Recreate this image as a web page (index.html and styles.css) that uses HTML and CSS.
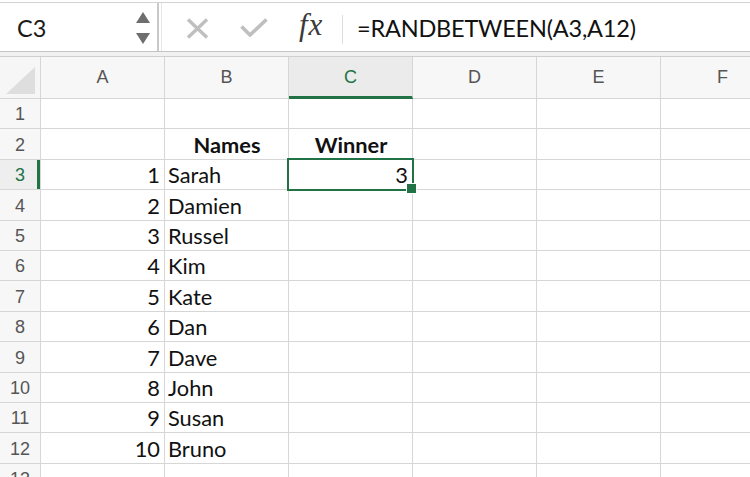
FILE: index.html
```html
<!DOCTYPE html>
<html>
<head>
<meta charset="utf-8">
<link rel="stylesheet" href="styles.css">
</head>
<body>
<div class="app">
  <div class="fbar">
    <div class="namebox">
      <span class="ref">C3</span>
      <div class="spin">
        <svg width="14" height="11" viewBox="0 0 14 11"><polygon points="7,0 14,11 0,11" fill="#6e6e6e"/></svg>
        <svg width="14" height="11" viewBox="0 0 14 11"><polygon points="0,0 14,0 7,11" fill="#6e6e6e"/></svg>
      </div>
    </div>
    <div class="fsep"></div>
    <div class="tools">
      <svg class="ico-x" width="23" height="21" viewBox="0 0 23 21"><path d="M2 1.5 L21 19.5 M21 1.5 L2 19.5" stroke="#bfbfbf" stroke-width="3.4" fill="none"/></svg>
      <svg class="ico-ok" width="28" height="19" viewBox="0 0 28 19"><path d="M1.5 8.5 L10 17 L26.5 1.5" stroke="#bfbfbf" stroke-width="3.6" fill="none"/></svg>
      <span class="fx">fx</span>
    </div>
    <div class="vsep"></div>
    <div class="formula">=RANDBETWEEN(A3,A12)</div>
  </div>
  <div class="gap"></div>
  <div class="sheet">
    <div class="corner"><svg width="30" height="28" viewBox="0 0 30 28"><polygon points="29,0 29,27 0,27" fill="#dedede"/></svg></div>
    <div class="ch">A</div>
    <div class="ch">B</div>
    <div class="ch sel">C</div>
    <div class="ch">D</div>
    <div class="ch">E</div>
    <div class="ch">F</div>

    <div class="rh">1</div><div class="c"></div><div class="c"></div><div class="c"></div><div class="c"></div><div class="c"></div><div class="c"></div>
    <div class="rh">2</div><div class="c"></div><div class="c b ctr">Names</div><div class="c b ctr">Winner</div><div class="c"></div><div class="c"></div><div class="c"></div>
    <div class="rh sel">3</div><div class="c num">1</div><div class="c">Sarah</div><div class="c num active">3</div><div class="c"></div><div class="c"></div><div class="c"></div>
    <div class="rh">4</div><div class="c num">2</div><div class="c">Damien</div><div class="c"></div><div class="c"></div><div class="c"></div><div class="c"></div>
    <div class="rh">5</div><div class="c num">3</div><div class="c">Russel</div><div class="c"></div><div class="c"></div><div class="c"></div><div class="c"></div>
    <div class="rh">6</div><div class="c num">4</div><div class="c">Kim</div><div class="c"></div><div class="c"></div><div class="c"></div><div class="c"></div>
    <div class="rh">7</div><div class="c num">5</div><div class="c">Kate</div><div class="c"></div><div class="c"></div><div class="c"></div><div class="c"></div>
    <div class="rh">8</div><div class="c num">6</div><div class="c">Dan</div><div class="c"></div><div class="c"></div><div class="c"></div><div class="c"></div>
    <div class="rh">9</div><div class="c num">7</div><div class="c">Dave</div><div class="c"></div><div class="c"></div><div class="c"></div><div class="c"></div>
    <div class="rh">10</div><div class="c num">8</div><div class="c">John</div><div class="c"></div><div class="c"></div><div class="c"></div><div class="c"></div>
    <div class="rh">11</div><div class="c num">9</div><div class="c">Susan</div><div class="c"></div><div class="c"></div><div class="c"></div><div class="c"></div>
    <div class="rh">12</div><div class="c num">10</div><div class="c">Bruno</div><div class="c"></div><div class="c"></div><div class="c"></div><div class="c"></div>
    <div class="rh">13</div><div class="c"></div><div class="c"></div><div class="c"></div><div class="c"></div><div class="c"></div><div class="c"></div>
  </div>
</div>
</body>
</html>
```
FILE: styles.css
```css
html, body {
  margin: 0;
  padding: 0;
  background: #fff;
}
.app {
  width: 750px;
  height: 477px;
  overflow: hidden;
  font-family: Lato, "Open Sans", sans-serif;
}
.fbar {
  display: flex;
  align-items: stretch;
  height: 48px;
  margin-top: 2px;
  border-top: 1px solid #d3d3d3;
  border-bottom: 1px solid #c4c4c4;
  background: #fff;
}
.namebox {
  width: 157px;
  display: flex;
  align-items: center;
  justify-content: space-between;
  padding: 0 7px 0 17px;
  box-sizing: border-box;
}
.ref {
  font-size: 23.5px;
  color: #1a1a1a;
  padding-top: 2px;
}
.spin {
  display: flex;
  flex-direction: column;
  gap: 10px;
  padding-top: 1px;
}
.fsep {
  width: 2px;
  border-left: 2px solid #c9c9c9;
  border-right: 1px solid #e6e6e6;
}
.tools {
  display: flex;
  align-items: center;
  padding-left: 24px;
  width: 180px;
  box-sizing: border-box;
}
.ico-x { margin-top: 2px; }
.ico-ok { margin-left: 31px; margin-top: 1px; }
.fx {
  margin-left: 31px;
  font-family: "Liberation Serif", "DejaVu Serif", serif;
  font-style: italic;
  font-size: 31px;
  color: #3a3a3a;
  letter-spacing: 1px;
  padding-bottom: 4px;
}
.vsep {
  width: 1px;
  background: #dcdcdc;
  margin: 12px 0 7px 0;
}
.formula {
  display: flex;
  align-items: center;
  padding-left: 14px;
  padding-top: 2px;
  font-size: 23.5px;
  color: #111;
  letter-spacing: -0.2px;
}
.gap {
  height: 4px;
  background: #f1f1f1;
  border-bottom: 1px solid #cfcfcf;
}
.sheet {
  display: grid;
  grid-template-columns: 41px repeat(6, 124px);
  grid-template-rows: 42px repeat(13, 30.4px);
}
.sheet > div {
  box-sizing: border-box;
  border-right: 1px solid #d6d6d6;
  border-bottom: 1px solid #d6d6d6;
}
.corner {
  background: #f6f6f6;
  display: flex;
  align-items: flex-end;
  justify-content: flex-end;
  padding: 0 4px 3px 0;
}
.ch {
  background: #f7f7f7;
  display: flex;
  align-items: flex-end;
  justify-content: center;
  padding-bottom: 10px;
  font-family: "Liberation Sans", Arial, sans-serif;
  font-size: 18px;
  color: #555;
}
.ch.sel {
  background: #ebebeb;
  color: #217346;
  border-bottom: 3px solid #217346;
  padding-bottom: 8px;
}
.rh {
  background: #f7f7f7;
  display: flex;
  align-items: flex-end;
  justify-content: center;
  padding-bottom: 3px;
  font-family: "Liberation Sans", Arial, sans-serif;
  font-size: 18px;
  color: #555;
}
.rh.sel {
  color: #217346;
  background: #eeeeee;
  box-shadow: inset -3px 0 0 #217346;
}
.c {
  display: flex;
  align-items: flex-end;
  padding: 0 2px 1px 3px;
  font-size: 21.8px;
  color: #111;
}
.c.num {
  justify-content: flex-end;
  padding-right: 4px;
}
.c.ctr {
  justify-content: center;
}
.c.b {
  font-weight: 700;
}
.c.active {
  position: relative;
}
.c.active::before {
  content: "";
  position: absolute;
  left: -2px;
  top: -2px;
  right: -2px;
  bottom: -2px;
  border: 2.5px solid #217346;
  box-sizing: border-box;
  z-index: 2;
}
.c.active::after {
  content: "";
  position: absolute;
  right: -5px;
  bottom: -5px;
  width: 9px;
  height: 9px;
  background: #217346;
  border: 1px solid #fff;
  z-index: 3;
}
```
